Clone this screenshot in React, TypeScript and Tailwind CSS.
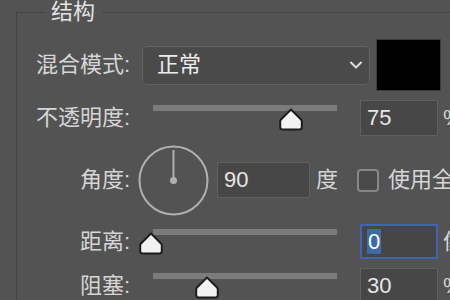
import React from 'react';

const font = { fontFamily: '"Liberation Sans", "Noto Sans CJK SC", sans-serif' };

function Thumb() {
  return (
    <svg width="24" height="23" viewBox="0 0 24 23">
      <path
        d="M12 1.5 L22 11.5 Q22.8 12.3 22.8 13.5 L22.8 19 Q22.8 21.5 20.3 21.5 L3.7 21.5 Q1.2 21.5 1.2 19 L1.2 13.5 Q1.2 12.3 2 11.5 Z"
        fill="#f2f2f2"
        stroke="#1c1c1c"
        strokeWidth="2"
        strokeLinejoin="round"
      />
    </svg>
  );
}

function Slider({ value }: { value: number }) {
  return (
    <div className="relative ml-[12px] h-[36px] w-[206px] shrink-0">
      <div className="absolute left-[11px] top-[5px] h-[6px] w-[184px] bg-[#7b7b7b]" />
      <div className="absolute top-[8px]" style={{ left: -3 + (186 * value) / 100 }}>
        <Thumb />
      </div>
    </div>
  );
}

function Label({ children }: { children: React.ReactNode }) {
  return <div className="w-[113px] shrink-0 text-right text-[22px] leading-none text-[#d6d6d6]">{children}</div>;
}

function NumberBox({ value, focused }: { value: string; focused?: boolean }) {
  return (
    <div
      className={
        focused
          ? 'ml-[12px] flex h-[35px] w-[78px] shrink-0 items-center border-2 border-[#3f63b6] bg-[#464646] pl-[5px]'
          : 'ml-[12px] flex h-[36px] w-[78px] shrink-0 items-center border border-[#606060] bg-[#474747] pl-[6px]'
      }
    >
      {focused ? (
        <span className="flex h-[25px] items-center bg-[#3e6aa6] px-[1px] text-[22px] leading-none text-white">{value}</span>
      ) : (
        <span className="text-[22px] leading-none text-[#e6e6e6]">{value}</span>
      )}
    </div>
  );
}

export default function App() {
  return (
    <div className="h-[300px] w-[450px] overflow-hidden bg-[#535353]" style={font}>
      <fieldset className="ml-[16px] h-[340px] w-[480px] border-l border-t border-[#444444] pt-[15px]">
        <legend className="ml-[27px] h-[24px] px-[7px] text-[22px] leading-[24px] text-[#e4e4e4]">结构</legend>

        <div className="flex flex-col gap-[9px]">
          {/* 混合模式 */}
          <div className="flex h-[52px] items-center">
            <Label>混合模式:</Label>
            <div className="ml-[12px] flex h-[39px] w-[228px] shrink-0 items-center justify-between rounded-[5px] border border-[#626262] bg-[#4a4a4a] pl-[14px] pr-[7px]">
              <span className="text-[22px] leading-none text-[#ececec]">正常</span>
              <svg width="12" height="8" viewBox="0 0 12 8">
                <path d="M1 1.5 L6 6.5 L11 1.5" fill="none" stroke="#dddddd" strokeWidth="2" strokeLinecap="round" strokeLinejoin="round" />
              </svg>
            </div>
            <div className="ml-[6px] h-[52px] w-[65px] shrink-0 border border-[#3d3d3d] bg-black" />
          </div>

          {/* 不透明度 */}
          <div className="flex h-[36px] items-center">
            <Label>不透明度:</Label>
            <Slider value={75} />
            <NumberBox value="75" />
            <span className="ml-[5px] shrink-0 text-[22px] leading-none text-[#d6d6d6]">%</span>
          </div>

          {/* 角度 */}
          <div className="flex h-[70px] items-center">
            <Label>角度:</Label>
            <svg className="ml-[8px] shrink-0" width="71" height="71" viewBox="0 0 71 71">
              <circle cx="35.5" cy="35.5" r="34" fill="none" stroke="#b0b0b0" strokeWidth="2" />
              <line x1="35.5" y1="35.5" x2="35.5" y2="5" stroke="#b0b0b0" strokeWidth="2" />
              <circle cx="35.5" cy="35.5" r="3.5" fill="#b0b0b0" />
            </svg>
            <div className="ml-[8px] flex h-[36px] w-[93px] shrink-0 items-center border border-[#606060] bg-[#474747] pl-[6px]">
              <span className="text-[22px] leading-none text-[#e6e6e6]">90</span>
            </div>
            <span className="ml-[6px] w-[22px] shrink-0 text-[22px] leading-none text-[#d6d6d6]">度</span>
            <div className="ml-[19px] h-[23px] w-[22px] shrink-0 rounded-[4px] border-2 border-[#888888] bg-[#4a4a4a]" />
            <span className="ml-[9px] shrink-0 whitespace-nowrap text-[22px] leading-none text-[#d6d6d6]">使用全局光</span>
          </div>

          {/* 距离 */}
          <div className="flex h-[35px] items-center">
            <Label>距离:</Label>
            <Slider value={0} />
            <NumberBox value="0" focused />
            <span className="ml-[5px] shrink-0 whitespace-nowrap text-[22px] leading-none text-[#d6d6d6]">像素</span>
          </div>

          {/* 阻塞 */}
          <div className="flex h-[36px] items-center">
            <Label>阻塞:</Label>
            <Slider value={30} />
            <NumberBox value="30" />
            <span className="ml-[5px] shrink-0 text-[22px] leading-none text-[#d6d6d6]">%</span>
          </div>
        </div>
      </fieldset>
    </div>
  );
}
